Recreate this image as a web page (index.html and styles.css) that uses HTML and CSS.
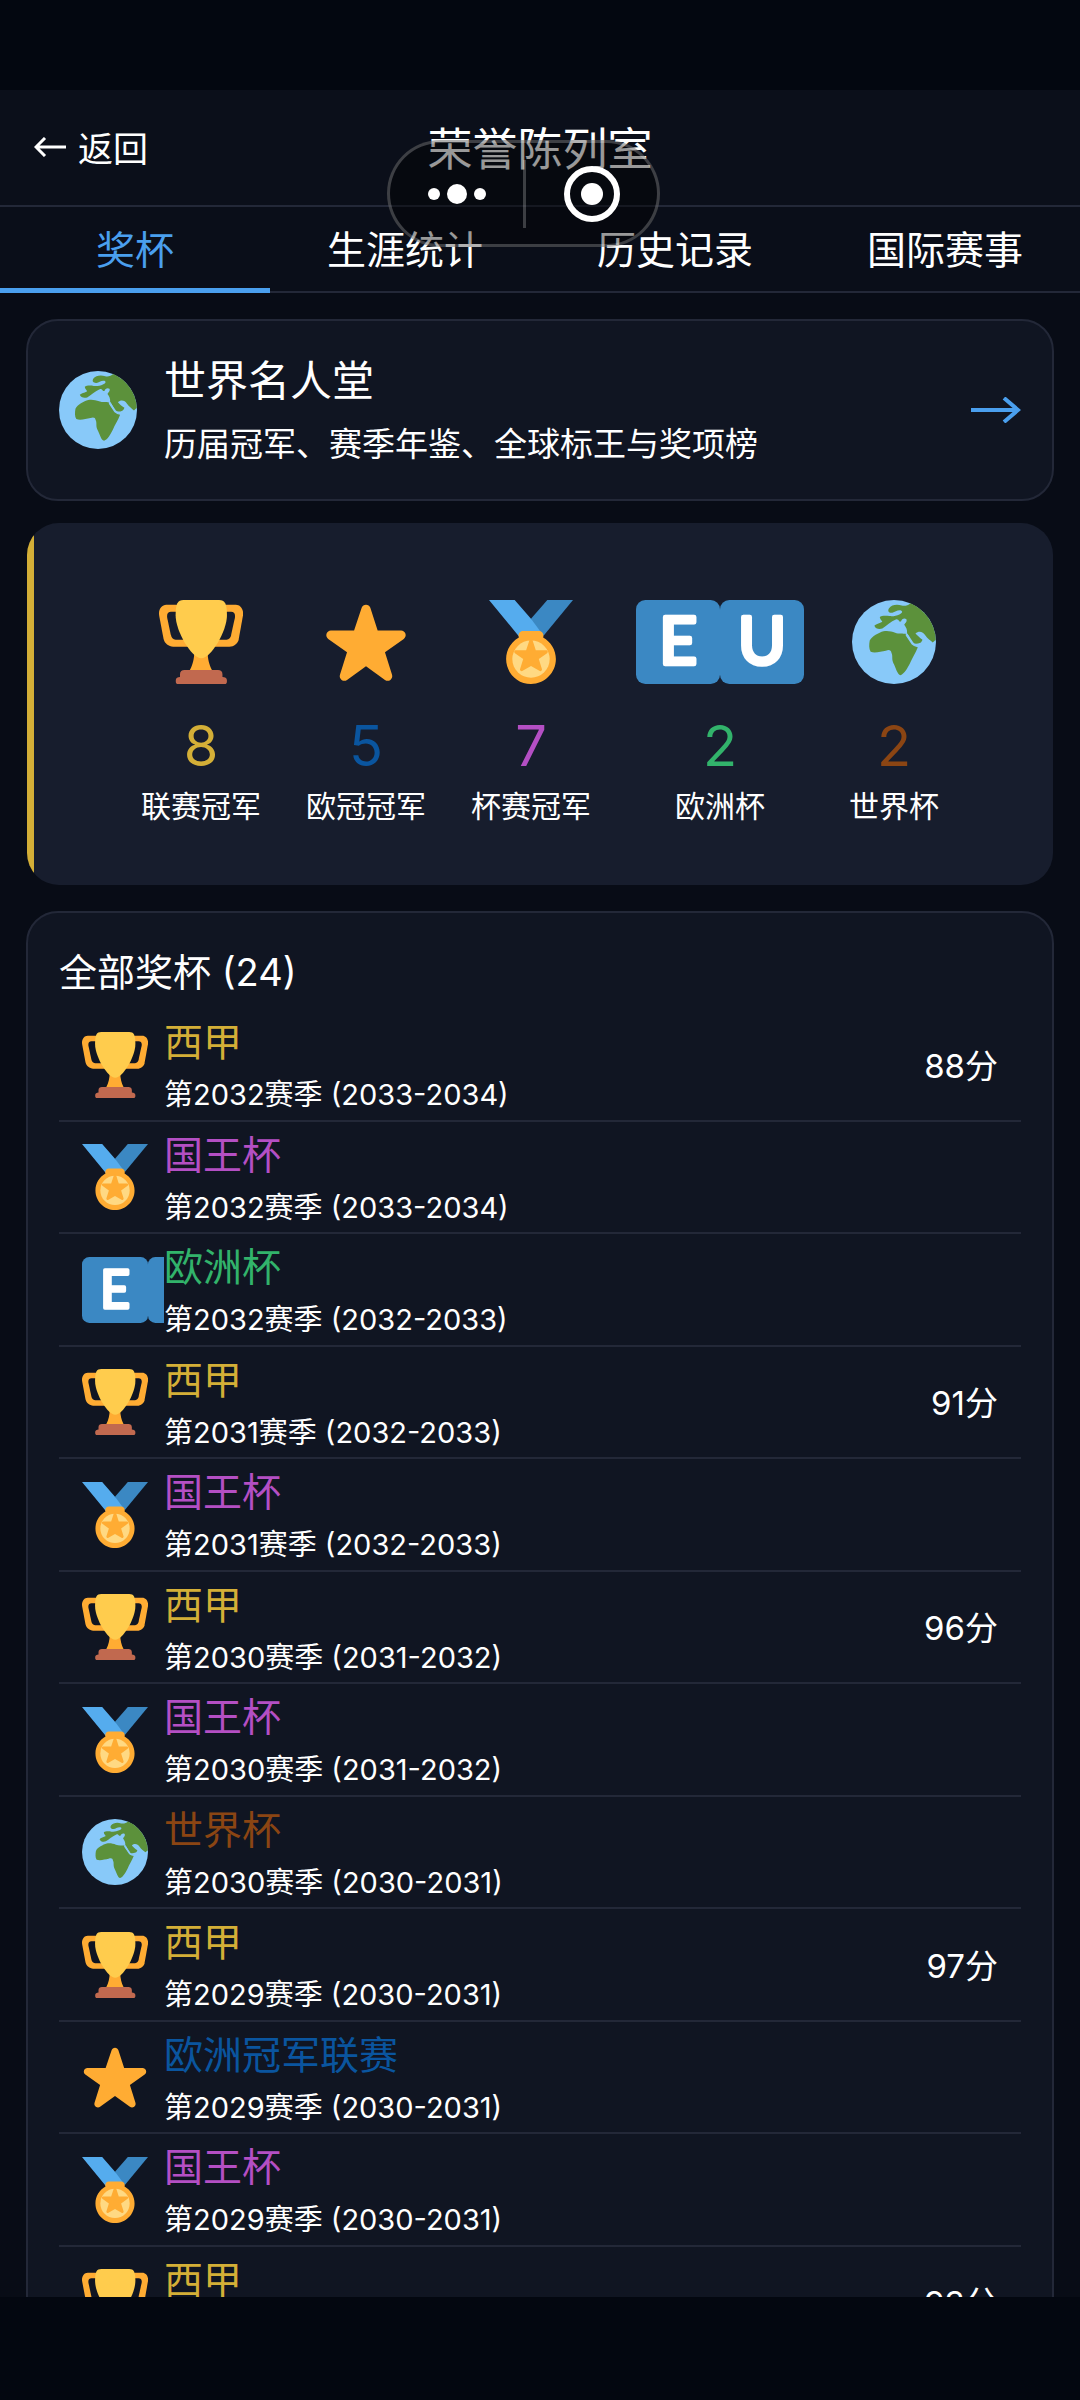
FILE: index.html
```html
<!DOCTYPE html>
<html lang="zh-CN">
<head>
<meta charset="utf-8">
<meta name="viewport" content="width=device-width, initial-scale=1">
<title>荣誉陈列室</title>
<link rel="stylesheet" href="styles.css">
</head>
<body>
<svg class="sprite" aria-hidden="true">
  <symbol id="trophy" viewBox="0 0 36 36">
    <path fill="#FFAC33" d="M5.123 5h6C12.227 5 13 4.896 13 6V4c0-1.104-.773-2-1.877-2h-8c-2 0-3.583 2.125-3 5 0 0 1.791 9.375 1.917 9.958C2.373 18.5 4.164 20 6.081 20h6.958c1.105 0-.039-1.896-.039-3v-2c0 1.104-.773 2-1.877 2h-4c-1.104 0-1.833-1.042-2-2S3.539 7.667 3.539 7.667C3.206 5.75 4.018 5 5.123 5zm25.812 0h-6C23.831 5 22 4.896 22 6V4c0-1.104 1.831-2 2.935-2h8c2 0 3.584 2.125 3 5 0 0-1.633 9.419-1.771 10-.354 1.5-2.042 3-4 3h-7.146C21.914 20 22 18.104 22 17v-2c0 1.104 1.831 2 2.935 2h4c1.104 0 1.834-1.042 2-2s1.584-7.333 1.584-7.333C32.851 5.75 32.04 5 30.935 5zM20.832 22c0-6.958-2.709 0-2.709 0s-3-6.958-3 0-3.291 10-3.291 10h12.292s-3.292-3.042-3.292-10z"/>
    <path fill="#FFCC4D" d="M29.123 6.577c0 6.775-6.77 18.423-11 18.423-4.231 0-11-11.649-11-18.423C7.123 1.495 8 0 10.5 0h15.3c2.4 0 3.323 1.495 3.323 6.577z"/>
    <path fill="#C1694F" d="M27.2 33v-1.200c0-1.200-.8-1.800-1.900-1.800H10.900c-1.100 0-1.900.6-1.900 1.800V33c-1 0-1.800.5-1.800 1.300v.7c0 .6.4 1 .9 1h20.100c.5 0 .9-.4.9-1v-.7c0-.8-.8-1.300-1.900-1.300z"/>
  </symbol>
  <symbol id="star" viewBox="0 0 36 36">
    <path fill="#FFAC33" d="M27.287 34.627c-.404 0-.806-.124-1.152-.371L18 28.422l-8.135 5.834c-.343.246-.743.37-1.146.37-.408 0-.818-.126-1.165-.378-.693-.504-.981-1.395-.72-2.210l3.034-9.666-8.062-5.681c-.695-.501-.987-1.391-.729-2.208.259-.816 1.010-1.373 1.866-1.379l9.948-.015 3.252-9.740C16.428 2.512 17.172 2 18 2s1.572.512 1.857 1.350l3.136 9.739 10.057.015c.859.007 1.613.563 1.872 1.380.258.817-.036 1.706-.733 2.208l-8.062 5.680 3.034 9.666c.262.814-.029 1.706-.722 2.210-.346.254-.751.379-1.152.379z"/>
  </symbol>
  <symbol id="medal" viewBox="0 0 36 36">
    <path fill="#55ACEE" d="M18 8l-7-8H0l14 17 11.521-4.750z"/>
    <path fill="#3B88C3" d="M25 0l-7 8 5.390 7.312 1.227-1.489L36 0z"/>
    <path fill="#FFAC33" d="M23.205 16.026c.08-.217.131-.448.131-.693 0-1.104-.896-2-2-2h-6.667c-1.104 0-2 .896-2 2 0 .245.050.476.131.693-3.258 1.826-5.464 5.307-5.464 9.307C7.335 31.224 12.111 36 18.002 36s10.667-4.776 10.667-10.667c0-4-2.206-7.481-5.464-9.307z"/>
    <circle fill="#FFD983" cx="18" cy="25.333" r="8"/>
    <path fill="#FFAC33" d="M21.999 30.500c-.147 0-.293-.045-.417-.134L18 28.302l-3.582 2.064c-.254.181-.584.179-.834-.004-.250-.184-.354-.506-.259-.801l1.336-4.253-3.549-2.500c-.252-.180-.354-.5-.261-.794s.364-.497.673-.502l4.378-.007 1.431-4.286c.1-.289.363-.482.667-.482.304 0 .567.193.667.482l1.381 4.286 4.426.007c.310.005.580.208.674.502.093.294-.012.614-.261.794l-3.549 2.500 1.336 4.253c.093.295-.012.617-.261.801-.124.091-.271.138-.416.138z"/>
  </symbol>
  <symbol id="globe" viewBox="0 0 36 36">
    <circle fill="#88C9F9" cx="18" cy="18" r="18"/>
    <path fill="#5C913B" d="M25 1.400C24 2.500 22.500 2.600 21.300 2.400C19.500 1.800 17 1.900 15.800 3.600C15.100 4.900 16 5.600 17.300 5.500C18.500 5.200 19.500 4.200 21 4.500C22 5 21.300 5.800 20.300 6.200C19 6.800 17.500 7.100 16 6.900C14.500 6.600 12.500 6.700 11.900 7.300C12 8.300 12.700 8.700 13 9.300C12 10 10 10.300 9.600 11C10 12.200 11.500 12.700 13 12.200C14.800 11.200 16.500 9.300 19 8.300C19.600 8.300 20 8.600 20.300 9.200H21C21.300 8.200 22.300 7.600 23.300 8.200C23.800 9.200 22.600 10 22.400 10.600C23 11.500 23.800 12.600 23.600 14.200C25 16 25.500 19 27.300 19.500C29 19.300 29.800 18 30.200 17C29 16.300 28 15.200 27.200 14.400C28.500 13 30.500 13.500 31.300 15C32.300 16.500 33.800 17.500 34.600 18.200L35.900 17A18 18 0 0 0 25 1.400z"/>
    <path fill="#5C913B" d="M13.500 13.400C15 13 17 13.400 18.500 14C20 14.600 22 14.200 23 14.500C24 16.500 25.500 18.500 26.800 19.800L28.200 20.200C27.300 22.600 25.700 25 24.900 27C23.800 29.200 22.500 31.600 20.800 32.200C19.400 32 18.800 29 17.700 27C16.900 25 17.600 24 16.900 22.600C16.700 21.500 16 21.200 14.500 21.700C12.500 22 10 22.900 8 22.200C7.200 21 7.300 19 7.600 17.400C8.500 15.500 11.500 14 13.500 13.400z"/>
    <path fill="none" stroke="#88C9F9" stroke-linecap="round" stroke-width="1" d="M23.500 15L26 18.700Q27 19.700 29.500 18.800"/>
  </symbol>
  <symbol id="tile-e" viewBox="0 0 36 36">
    <rect fill="#3B88C3" width="36" height="36" rx="4"/>
    <text class="tile-letter" x="18" y="27.600">E</text>
  </symbol>
  <symbol id="tile-u" viewBox="0 0 36 36">
    <rect fill="#3B88C3" width="36" height="36" rx="4"/>
    <text class="tile-letter" x="18" y="27.600">U</text>
  </symbol>
</svg>

<div class="status-bar"></div>

<header class="header">
  <button class="back" type="button">
    <svg class="back-arrow" viewBox="0 0 32 20" aria-hidden="true"><path d="M32 10H2M11 1L2 10l9 9"/></svg>
    返回
  </button>
  <h1 class="title">荣誉陈列室</h1>
</header>

<nav class="tabs">
  <button class="tab active" type="button">奖杯</button>
  <button class="tab" type="button">生涯统计</button>
  <button class="tab" type="button">历史记录</button>
  <button class="tab" type="button">国际赛事</button>
</nav>

<div class="capsule">
  <button type="button" aria-label="更多">
    <svg class="dots" viewBox="0 0 58 24"><circle cx="6" cy="12" r="6"/><circle cx="29" cy="12" r="10"/><circle cx="52" cy="12" r="6"/></svg>
  </button>
  <button type="button" aria-label="关闭">
    <svg class="ring" viewBox="0 0 56 56"><circle class="ring-line" cx="28" cy="28" r="25"/><circle cx="28" cy="28" r="11"/></svg>
  </button>
</div>

<main class="content">
  <a class="card hall" href="#hall">
    <svg class="hall-icon"><use href="#globe"/></svg>
    <span class="hall-text">
      <span class="hall-title">世界名人堂</span>
      <span class="hall-desc">历届冠军、赛季年鉴、全球标王与奖项榜</span>
    </span>
    <svg class="hall-arrow" viewBox="0 0 50 26" aria-hidden="true"><path d="M0 13h47M33 1l14 12-14 12"/></svg>
  </a>

  <section class="summary">
    <div class="stat"><span class="stat-icon"><svg><use href="#trophy"/></svg></span><span class="stat-num gold">8</span><span class="stat-label">联赛冠军</span></div>
    <div class="stat"><span class="stat-icon"><svg><use href="#star"/></svg></span><span class="stat-num blue">5</span><span class="stat-label">欧冠冠军</span></div>
    <div class="stat"><span class="stat-icon"><svg><use href="#medal"/></svg></span><span class="stat-num purple">7</span><span class="stat-label">杯赛冠军</span></div>
    <div class="stat"><span class="stat-icon"><svg><use href="#tile-e"/></svg><svg><use href="#tile-u"/></svg></span><span class="stat-num green">2</span><span class="stat-label">欧洲杯</span></div>
    <div class="stat"><span class="stat-icon"><svg><use href="#globe"/></svg></span><span class="stat-num brown">2</span><span class="stat-label">世界杯</span></div>
  </section>

  <section class="card trophies">
    <h2 class="section-title">全部奖杯 (24)</h2>
    <ul class="list">
      <li class="row"><span class="row-icon"><svg><use href="#trophy"/></svg></span><div class="info"><span class="name gold">西甲</span><span class="season">第2032赛季 (2033-2034)</span></div><span class="score">88分</span></li>
      <li class="row"><span class="row-icon"><svg><use href="#medal"/></svg></span><div class="info"><span class="name purple">国王杯</span><span class="season">第2032赛季 (2033-2034)</span></div></li>
      <li class="row"><span class="row-icon"><svg><use href="#tile-e"/></svg><svg><use href="#tile-u"/></svg></span><div class="info"><span class="name green">欧洲杯</span><span class="season">第2032赛季 (2032-2033)</span></div></li>
      <li class="row"><span class="row-icon"><svg><use href="#trophy"/></svg></span><div class="info"><span class="name gold">西甲</span><span class="season">第2031赛季 (2032-2033)</span></div><span class="score">91分</span></li>
      <li class="row"><span class="row-icon"><svg><use href="#medal"/></svg></span><div class="info"><span class="name purple">国王杯</span><span class="season">第2031赛季 (2032-2033)</span></div></li>
      <li class="row"><span class="row-icon"><svg><use href="#trophy"/></svg></span><div class="info"><span class="name gold">西甲</span><span class="season">第2030赛季 (2031-2032)</span></div><span class="score">96分</span></li>
      <li class="row"><span class="row-icon"><svg><use href="#medal"/></svg></span><div class="info"><span class="name purple">国王杯</span><span class="season">第2030赛季 (2031-2032)</span></div></li>
      <li class="row"><span class="row-icon"><svg><use href="#globe"/></svg></span><div class="info"><span class="name brown">世界杯</span><span class="season">第2030赛季 (2030-2031)</span></div></li>
      <li class="row"><span class="row-icon"><svg><use href="#trophy"/></svg></span><div class="info"><span class="name gold">西甲</span><span class="season">第2029赛季 (2030-2031)</span></div><span class="score">97分</span></li>
      <li class="row"><span class="row-icon"><svg><use href="#star"/></svg></span><div class="info"><span class="name blue">欧洲冠军联赛</span><span class="season">第2029赛季 (2030-2031)</span></div></li>
      <li class="row"><span class="row-icon"><svg><use href="#medal"/></svg></span><div class="info"><span class="name purple">国王杯</span><span class="season">第2029赛季 (2030-2031)</span></div></li>
      <li class="row"><span class="row-icon"><svg><use href="#trophy"/></svg></span><div class="info"><span class="name gold">西甲</span></div><span class="score">93分</span></li>
    </ul>
  </section>
</main>

<div class="bottom-bar"></div>
</body>
</html>
```
FILE: styles.css
```css
* {
  box-sizing: border-box;
}

body {
  margin: 0;
  height: 100vh;
  display: flex;
  flex-direction: column;
  background: #080c16;
  color: #fff;
  font-family: Inter, "Noto Sans CJK SC", sans-serif;
  font-size: 30px;
}

button {
  margin: 0;
  padding: 0;
  border: 0;
  background: none;
  color: inherit;
  font: inherit;
}

h1,
h2,
ul {
  margin: 0;
  padding: 0;
  font-weight: 400;
  list-style: none;
}

svg {
  display: block;
  flex: none;
}

.sprite {
  position: absolute;
  width: 0;
  height: 0;
}

.tile-letter {
  fill: #fff;
  stroke: #fff;
  stroke-width: 2px;
  stroke-linejoin: round;
  font-family: Lato, sans-serif;
  font-size: 28px;
  text-anchor: middle;
}

.gold { color: #d4af37; }
.blue { color: #0a559f; }
.purple { color: #b44fc4; }
.green { color: #32b36b; }
.brown { color: #8b4513; }

.status-bar,
.bottom-bar {
  flex: none;
  background: #030710;
}

.status-bar { height: 90px; }

.bottom-bar { height: 103px; }

.header {
  flex: none;
  display: grid;
  grid-template-columns: 1fr auto 1fr;
  align-items: center;
  height: 117px;
  padding: 0 34px 2px;
  background: #0b0f1a;
  border-bottom: 2px solid #232838;
}

.back {
  justify-self: start;
  display: flex;
  align-items: center;
  gap: 12px;
  font-size: 35px;
}

.back-arrow {
  width: 32px;
  height: 20px;
  fill: none;
  stroke: currentColor;
  stroke-width: 3px;
}

.title {
  font-size: 45px;
}

.tabs {
  flex: none;
  display: grid;
  grid-template-columns: repeat(4, 1fr);
  height: 86px;
  background: linear-gradient(#232838, #232838) bottom / 100% 2px no-repeat #0a0e19;
}

.tab {
  padding-bottom: 2px;
  font-size: 39px;
  border-bottom: 5px solid transparent;
}

.tab.active {
  color: #4a9fee;
  border-color: #4a9fee;
}

.capsule {
  position: absolute;
  top: 140px;
  left: 50%;
  width: 273px;
  height: 107px;
  margin-left: -153px;
  display: grid;
  grid-template-columns: 133px 1fr;
  align-items: center;
  border: 3px solid rgba(255, 255, 255, 0.22);
  border-radius: 54px;
  background: rgba(0, 0, 0, 0.4);
}

.capsule button {
  height: 68px;
  display: grid;
  place-items: center;
}

.capsule button + button {
  border-left: 3px solid rgba(255, 255, 255, 0.22);
}

.capsule svg {
  fill: #fff;
}

.dots {
  width: 58px;
  height: 24px;
}

.ring {
  width: 56px;
  height: 56px;
}

.ring .ring-line {
  fill: none;
  stroke: #fff;
  stroke-width: 6px;
}

.content {
  flex: 1;
  min-height: 0;
  padding: 26px 26px 0;
  overflow-y: auto;
  scrollbar-width: none;
}

.card {
  border: 2px solid #232838;
  border-radius: 32px;
  background: #101522;
}

.hall {
  display: flex;
  align-items: center;
  height: 182px;
  margin-bottom: 22px;
  padding: 0 31px;
  color: inherit;
  text-decoration: none;
}

.hall-icon {
  width: 78px;
  height: 78px;
}

.hall-text {
  flex: 1;
  display: flex;
  flex-direction: column;
  margin-left: 27px;
}

.hall-title {
  font-size: 42px;
  line-height: 68px;
}

.hall-desc {
  font-size: 33px;
  line-height: 58px;
}

.hall-arrow {
  width: 50px;
  height: 26px;
  fill: none;
  stroke: #4a9fee;
  stroke-width: 4px;
}

.summary {
  display: flex;
  justify-content: center;
  gap: 45px;
  height: 362px;
  margin: 0 1px 26px;
  padding-top: 77px;
  border-radius: 32px;
  background: linear-gradient(#d4af37, #d4af37) left / 7px 100% no-repeat #171d2d;
}

.stat {
  display: flex;
  flex-direction: column;
  align-items: center;
}

.stat-icon {
  display: flex;
}

.stat-icon svg {
  width: 84px;
  height: 84px;
}

.stat-num {
  margin-top: 24px;
  font-size: 56px;
  line-height: 76px;
}

.stat-label {
  font-size: 30px;
  line-height: 44px;
}

.trophies {
  padding: 31px 31px 0;
}

.section-title {
  font-size: 38px;
  line-height: 56px;
  margin-bottom: 9px;
}

.row {
  display: flex;
  height: 112px;
  padding: 0 23px;
  border-bottom: 2px solid #232838;
}

.row:nth-child(odd) {
  height: 113px;
}

.row-icon {
  display: flex;
  align-items: center;
  width: 82px;
  overflow: hidden;
}

.row-icon svg {
  width: 66px;
  height: 66px;
}

.info {
  flex: 1;
  display: flex;
  flex-direction: column;
  padding-top: 5px;
}

.name {
  font-size: 39px;
  line-height: 56px;
}

.season {
  font-size: 29px;
  line-height: 50px;
}

.score {
  align-self: center;
  padding-bottom: 2px;
  font-size: 33px;
}
```
